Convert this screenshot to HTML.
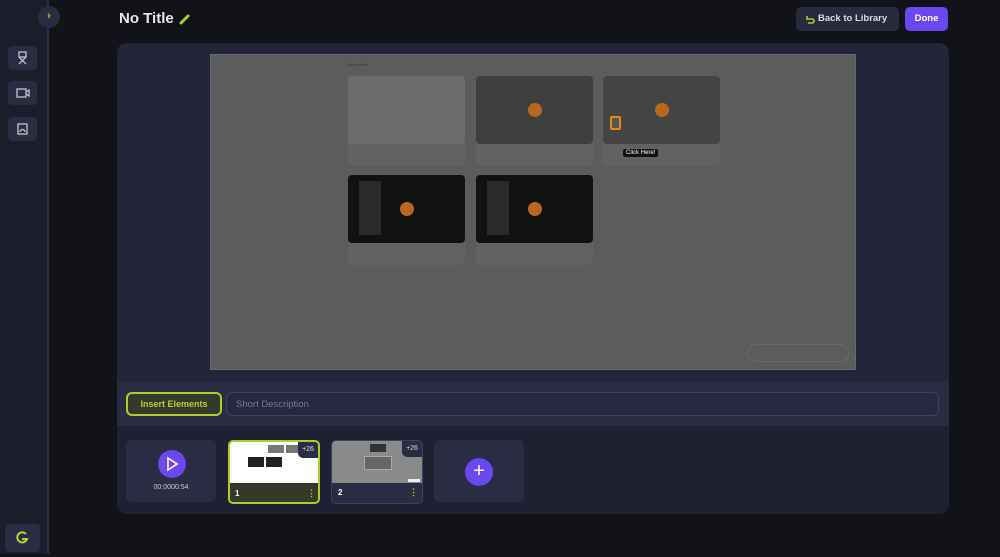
<!DOCTYPE html>
<html><head><style>
*{box-sizing:border-box;margin:0;padding:0}
body{width:1000px;height:554px;background:#121219;font-family:"Liberation Sans",sans-serif;position:relative;overflow:hidden}
.a{position:absolute}
.side{left:0;top:0;width:49px;height:554px;background:#1c1d2b;border-right:2px solid #2c2e48}
.sb{left:8px;width:29px;height:24px;background:#2a2c44;border-radius:4px}
.card{position:absolute;width:117px;height:90px;background:#626262;border-radius:4px}
.th{position:absolute;left:0;top:0;width:117px;height:68px;border-radius:4px}
.dot{position:absolute;width:14px;height:14px;border-radius:50%;background:#b8681e}
</style></head><body>
<div class="a side"></div>
<div class="a" style="left:38px;top:6px;width:22px;height:22px;border-radius:50%;background:#2a2c44;color:#b5d233;font-size:11px;font-weight:bold;text-align:center;line-height:21px">›</div>
<div class="a sb" style="top:46px"><svg width="29" height="24"><g stroke="#bbb" stroke-width="1.4" fill="none"><rect x="11" y="6" width="7" height="5"/><path d="M11 18l7-7M18 18l-7-7"/></g></svg></div>
<div class="a sb" style="top:81px"><svg width="29" height="24"><g stroke="#bbb" stroke-width="1.4" fill="none"><rect x="9" y="8" width="9" height="8"/><path d="M18 11l3-2v6l-3-2"/></g></svg></div>
<div class="a sb" style="top:117px"><svg width="29" height="24"><g stroke="#bbb" stroke-width="1.4" fill="none"><rect x="10" y="7" width="9" height="10"/><path d="M12 15a2.5 2.5 0 0 1 5 0"/></g></svg></div>
<div class="a sb" style="top:524px;left:5px;width:35px;height:28px"><svg width="35" height="28"><path d="M21 10a5 5 0 1 0 1 5h-5" stroke="#b5d233" stroke-width="2" fill="none"/></svg></div>

<div class="a" style="left:119px;top:10px;color:#e8e8f0;font-size:15px;font-weight:bold">No Title</div>
<svg class="a" style="left:179px;top:13px" width="12" height="12"><path d="M2 10L9 3" stroke="#a8cf2a" stroke-width="3" stroke-linecap="round"/></svg>
<div class="a" style="left:796px;top:7px;width:103px;height:24px;background:#282a3e;border-radius:5px;color:#ddd;font-size:9.5px;font-weight:bold;line-height:24px;padding-left:22px">Back to Library</div>
<svg class="a" style="left:805px;top:14px" width="10" height="10"><path d="M2 2v3h5a2 2 0 0 1 0 4H3" stroke="#a8cf2a" stroke-width="1.6" fill="none"/></svg>
<div class="a" style="left:905px;top:7px;width:43px;height:24px;background:#6b47f0;border-radius:5px;color:#fff;font-size:9.5px;font-weight:bold;line-height:24px;text-align:center">Done</div>

<div class="a" style="left:117px;top:43px;width:832px;height:471px;background:#1f2031;border-radius:10px"></div>
<div class="a" style="left:117px;top:43px;width:832px;height:339px;background:#23253a;border-radius:10px 10px 0 0"></div>
<div class="a" style="left:210px;top:54px;width:646px;height:316px;background:#5c5c5c;border:1px solid #6a6a6a">
 <div class="a" style="left:136px;top:7px;font-size:4px;color:#333">Saved Files</div>
 <div class="card" style="left:137px;top:21px"><div class="th" style="background:#6c6c6c"></div></div>
 <div class="card" style="left:265px;top:21px"><div class="th" style="background:#3e3e3e"><div class="dot" style="left:52px;top:27px"></div></div></div>
 <div class="card" style="left:392px;top:21px"><div class="th" style="background:#444"><div class="dot" style="left:52px;top:27px"></div><div class="a" style="left:7px;top:40px;width:11px;height:14px;border:2px solid #e88a10;border-radius:2px;background:#555"></div></div>
  <div class="a" style="left:20px;top:73px;background:#111;color:#fff;font-size:6px;padding:1px 3px;border-radius:2px">Click Here!</div></div>
 <div class="card" style="left:137px;top:120px"><div class="th" style="background:#111"><div class="dot" style="left:52px;top:27px"></div><div class="a" style="left:11px;top:6px;width:22px;height:54px;background:#2a2a2a"></div></div></div>
 <div class="card" style="left:265px;top:120px"><div class="th" style="background:#111"><div class="dot" style="left:52px;top:27px"></div><div class="a" style="left:11px;top:6px;width:22px;height:54px;background:#2a2a2a"></div></div></div>
 <div class="a" style="left:536px;top:289px;width:102px;height:18px;border:1px solid #6a6a6a;border-radius:9px"></div>
</div>
<div class="a" style="left:117px;top:382px;width:832px;height:44px;background:#2a2c44"></div>
<div class="a" style="left:126px;top:392px;width:96px;height:24px;background:#35382a;border:2px solid #a8cf2a;border-radius:6px;color:#b5d233;font-size:9px;font-weight:bold;text-align:center;line-height:20px">Insert Elements</div>
<div class="a" style="left:226px;top:392px;width:713px;height:24px;border:1px solid #3d4068;border-radius:6px;background:#262840;color:#777a90;font-size:9.5px;line-height:23px;padding-left:9px">Short Description</div>

<div class="a" style="left:126px;top:440px;width:90px;height:62px;background:#2a2c44;border-radius:5px"></div>
<div class="a" style="left:158px;top:450px;width:28px;height:28px;border-radius:50%;background:#6b47f0"></div>
<svg class="a" style="left:165px;top:456px" width="14" height="16"><path d="M3 2l9 6-9 6z" stroke="#fff" stroke-width="1.6" fill="none"/></svg>
<div class="a" style="left:126px;top:484px;width:90px;text-align:center;color:#ccc;font-size:7px">00:0000:54</div>

<div class="a" style="left:228px;top:440px;width:92px;height:64px;background:#35382a;border:2px solid #a8cf2a;border-radius:5px;overflow:hidden">
 <div class="a" style="left:0;top:0;width:88px;height:41px;background:#fff"></div>
 <div class="a" style="left:18px;top:15px;width:16px;height:10px;background:#222"></div><div class="a" style="left:36px;top:15px;width:16px;height:10px;background:#222"></div>
 <div class="a" style="left:38px;top:3px;width:16px;height:8px;background:#777"></div><div class="a" style="left:56px;top:3px;width:14px;height:8px;background:#777"></div>
 <div class="a" style="left:68px;top:0;width:20px;height:16px;background:#2a2c44;border-radius:0 0 0 5px;color:#ddd;font-size:7px;text-align:center;line-height:15px">+26</div>
 <div class="a" style="left:5px;top:47px;color:#fff;font-size:8px;font-weight:bold">1</div>
 <div class="a" style="left:77px;top:46px;color:#a8cf2a;font-size:9px;font-weight:bold">⋮</div>
</div>
<div class="a" style="left:331px;top:440px;width:92px;height:64px;background:#2a2c44;border:1px solid #3d4068;border-radius:5px;overflow:hidden">
 <div class="a" style="left:0;top:0;width:90px;height:42px;background:#8a8a8a"></div>
 <div class="a" style="left:32px;top:15px;width:28px;height:14px;background:#666;border:1px solid #aaa"></div>
 <div class="a" style="left:38px;top:3px;width:16px;height:8px;background:#333"></div>
 <div class="a" style="left:70px;top:0;width:20px;height:16px;background:#2a2c44;border-radius:0 0 0 5px;color:#ddd;font-size:7px;text-align:center;line-height:15px">+26</div>
 <div class="a" style="left:76px;top:38px;width:12px;height:3px;background:#eee"></div>
 <div class="a" style="left:6px;top:47px;color:#fff;font-size:8px;font-weight:bold">2</div>
 <div class="a" style="left:77px;top:46px;color:#a8cf2a;font-size:9px;font-weight:bold">⋮</div>
</div>
<div class="a" style="left:434px;top:440px;width:90px;height:62px;background:#2a2c44;border-radius:5px"></div>
<div class="a" style="left:465px;top:458px;width:28px;height:28px;border-radius:50%;background:#6b47f0;color:#fff;font-size:20px;text-align:center;line-height:27px">+</div>
</body></html>
